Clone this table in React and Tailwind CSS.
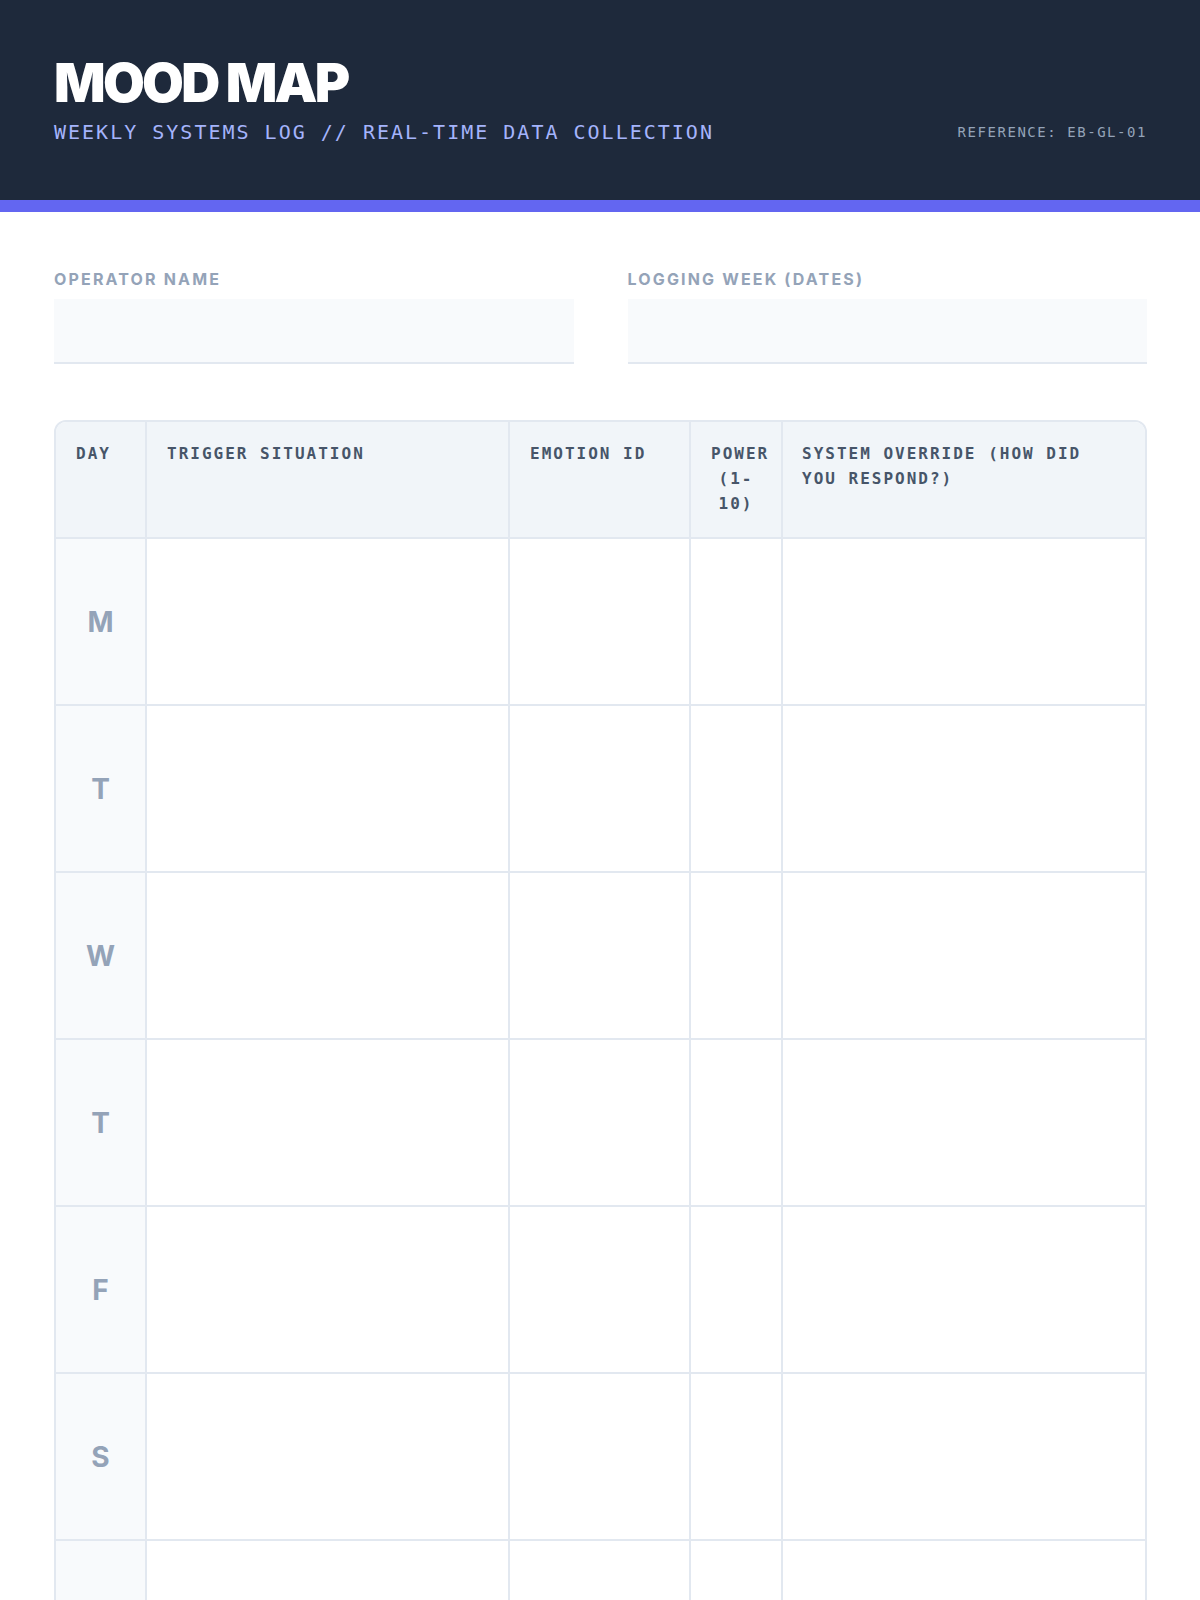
import React from 'react';

const mono = "font-['DejaVu_Sans_Mono',monospace]";

export default function App() {
  const days = ['M', 'T', 'W', 'T', 'F', 'S', 'S'];

  return (
    <div className="min-h-screen bg-white font-['Inter',sans-serif]">
      <header className="flex items-end justify-between border-b-[12px] border-[#6366f1] bg-[#1e293b] pl-[54px] pr-[53px] pt-14 pb-[54px]">
        <div>
          <h1 className="text-[54px] font-black leading-none tracking-[-0.05em] text-white">MOOD MAP</h1>
          <p className={`${mono} mt-2 text-xl leading-7 tracking-widest text-[#a5b4fc]`}>
            WEEKLY SYSTEMS LOG // REAL-TIME DATA COLLECTION
          </p>
        </div>
        <div className={`${mono} pb-1 text-sm leading-5 tracking-[0.11em] text-[#94a3b8]`}>REFERENCE: EB-GL-01</div>
      </header>

      <main className="pl-[54px] pr-[53px] pt-[55px]">
        <div className="grid grid-cols-2 gap-[54px]">
          <div>
            <label className="mb-2 block text-base font-bold leading-6 tracking-[0.135em] text-[#94a3b8]">OPERATOR NAME</label>
            <div className="h-[65px] border-b-2 border-[#e2e8f0] bg-[#f8fafc]" />
          </div>
          <div>
            <label className="mb-2 block text-base font-bold leading-6 tracking-[0.135em] text-[#94a3b8]">LOGGING WEEK (DATES)</label>
            <div className="h-[65px] border-b-2 border-[#e2e8f0] bg-[#f8fafc]" />
          </div>
        </div>

        <div className="mt-14 overflow-hidden rounded-xl border-2 border-[#e2e8f0]">
          <div className={`${mono} grid grid-cols-[91px_363px_181px_92px_1fr] border-b-2 border-[#e2e8f0] bg-[#f1f5f9] text-base font-bold leading-[25px] tracking-[0.125em] text-[#475569]`}>
            <div className="border-r-2 border-[#e2e8f0] px-5 pt-[19px] pb-[21px]">DAY</div>
            <div className="border-r-2 border-[#e2e8f0] px-5 pt-[19px] pb-[21px]">TRIGGER SITUATION</div>
            <div className="border-r-2 border-[#e2e8f0] px-5 pt-[19px] pb-[21px]">EMOTION ID</div>
            <div className="border-r-2 border-[#e2e8f0] px-5 pt-[19px] pb-[21px] text-center whitespace-nowrap">
              POWER<br />(1-<br />10)
            </div>
            <div className="pl-[19px] pr-5 pt-[19px] pb-[21px]">
              SYSTEM OVERRIDE (HOW DID<br />YOU RESPOND?)
            </div>
          </div>

          {days.map((day, i) => (
            <div key={i} className="grid h-[167px] grid-cols-[91px_363px_181px_92px_1fr] border-b-2 border-[#e2e8f0]">
              <div className="flex items-center justify-center border-r-2 border-[#e2e8f0] bg-[#f8fafc] text-[28px] font-bold text-[#94a3b8]">
                {day}
              </div>
              <div className="border-r-2 border-[#e2e8f0]" />
              <div className="border-r-2 border-[#e2e8f0]" />
              <div className="border-r-2 border-[#e2e8f0]" />
              <div />
            </div>
          ))}
        </div>
      </main>
    </div>
  );
}
